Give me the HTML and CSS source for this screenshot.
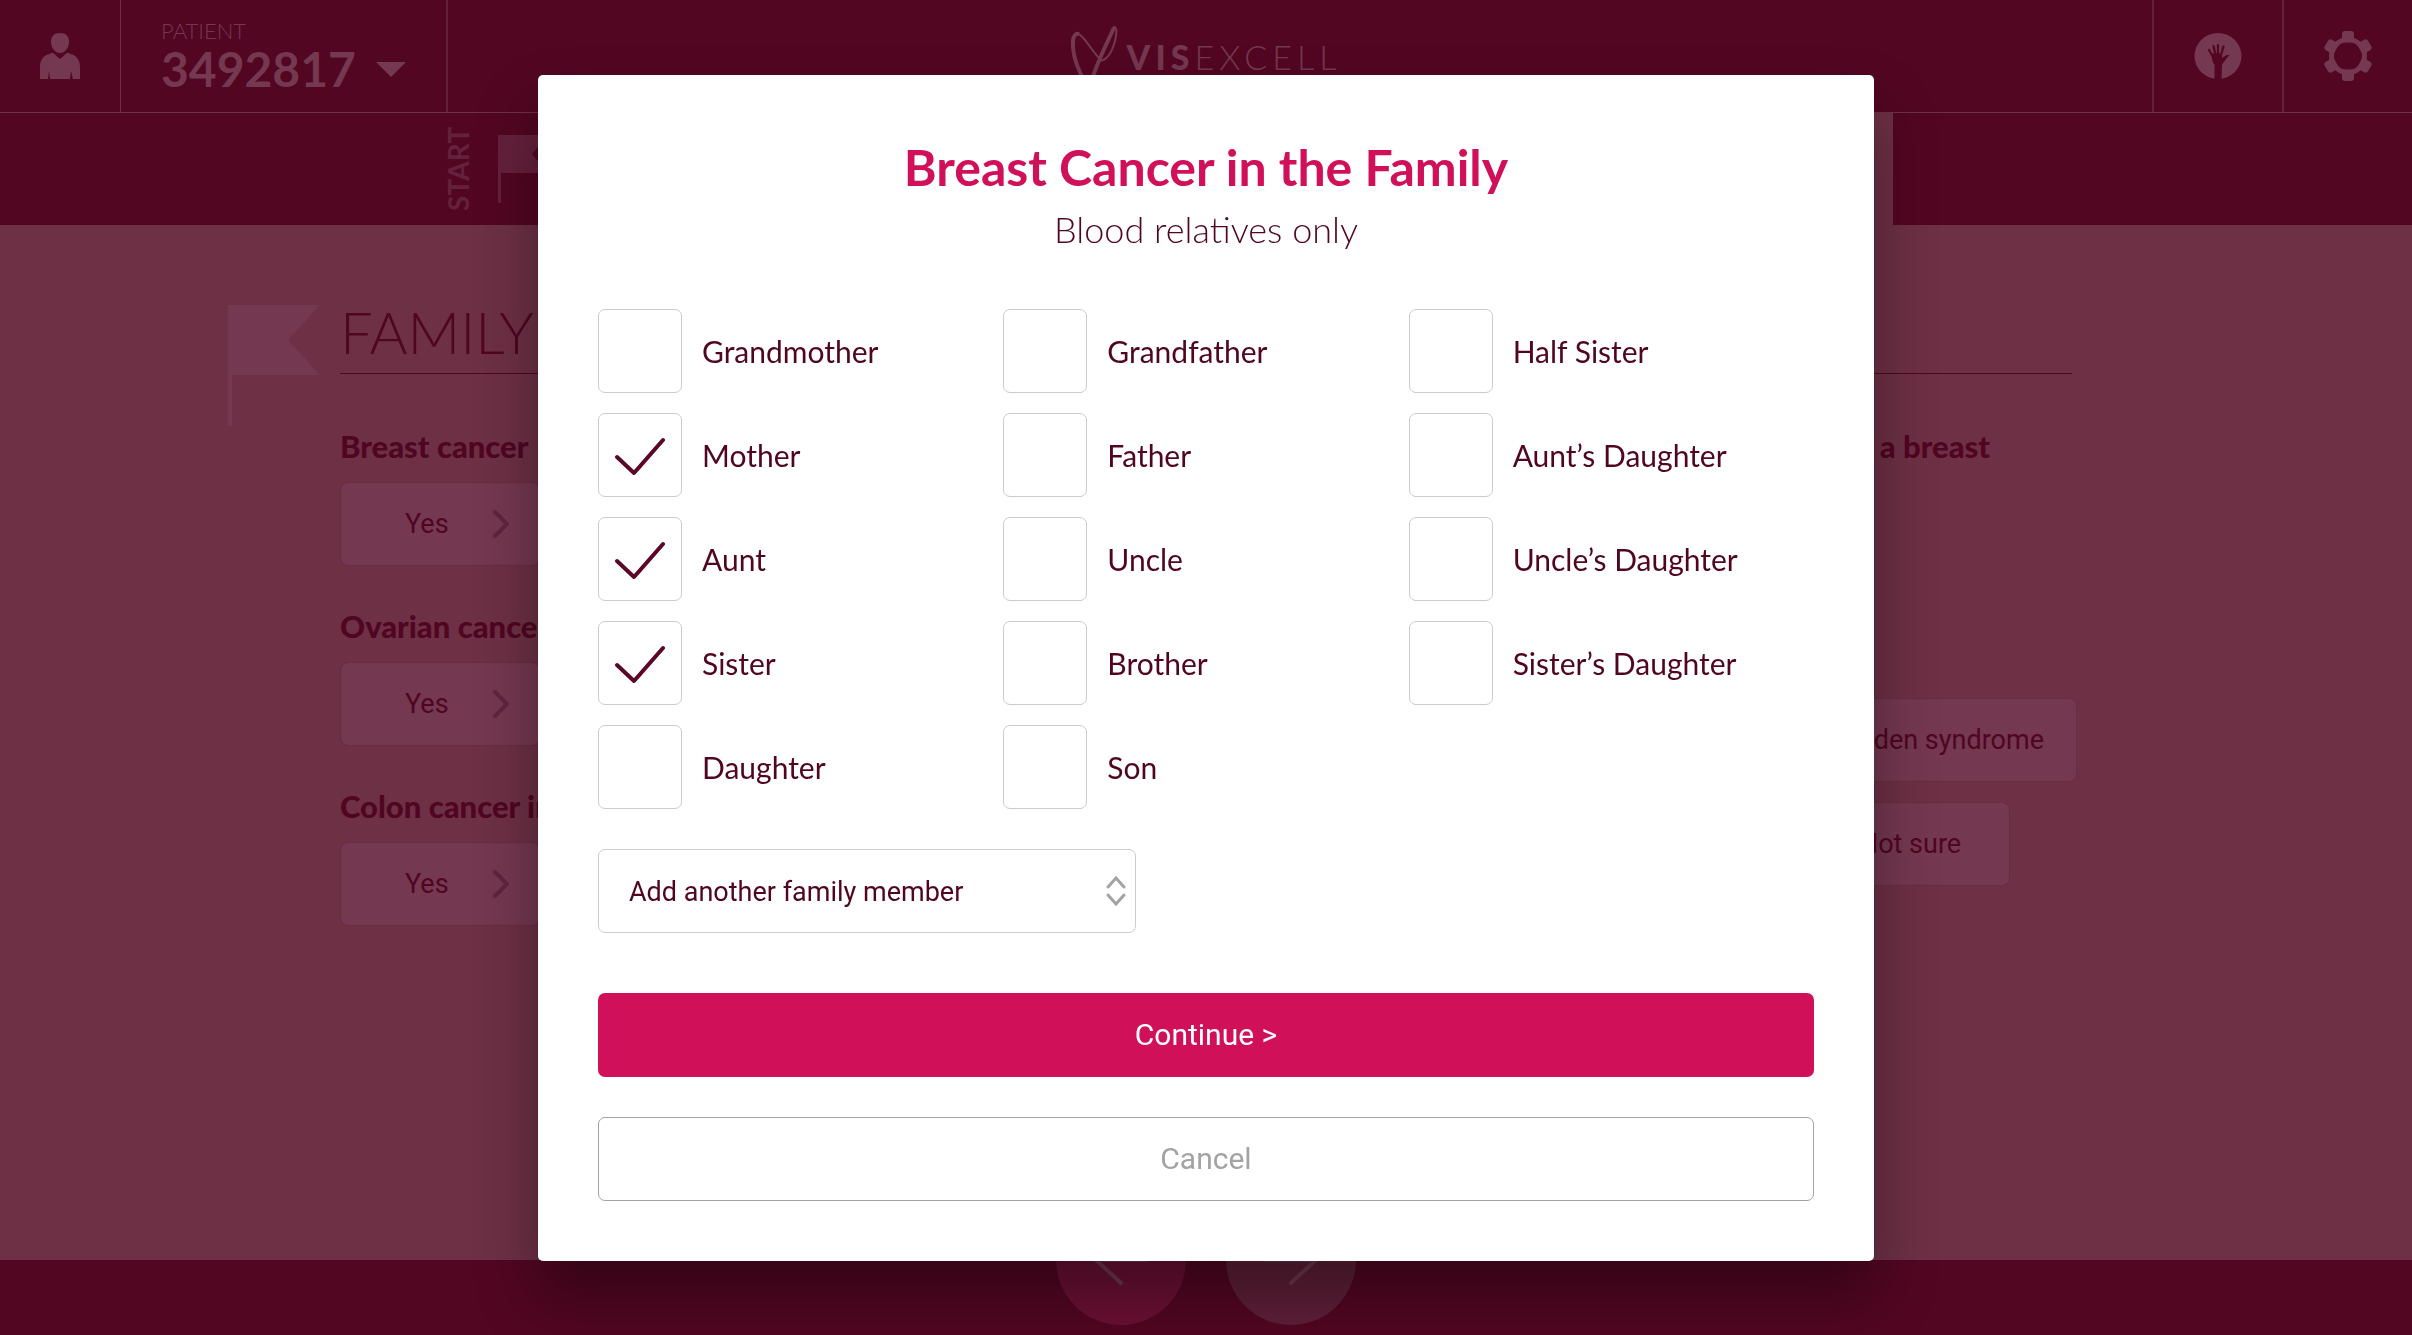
FILE: index.html
```
<!DOCTYPE html>
<html lang="en">
<head>
  <meta charset="UTF-8" />
  <meta name="viewport" content="width=device-width, initial-scale=1.0" />
  <title>Family History - Visexcell</title>
  <link rel="stylesheet" href="styles.css">
</head>
<body>

  <header class="header">
    <div class="header-left">
      <button class="header-icon user" aria-label="Account">
        <svg width="40" height="46" viewBox="0 0 40 46" fill="currentColor">
          <path d="M20 0C26 0 29 3 29 9C29 15 25 20 20 20C15 20 11 15 11 9C11 3 14 0 20 0Z" />
          <path d="M0 46V34C0 26 4 22 10 21L11 20H13C15 21 17 24 20 26C23 24 25 21 27 20H29L30 21C36 22 40 26 40 34V46H33L31 38L30 46H10L9 38L8 46Z" />
        </svg>
      </button>
      <button class="patient">
        <span class="patient-label">PATIENT</span>
        <span class="patient-number">3492817
          <svg width="30" height="15" viewBox="0 0 30 15" fill="currentColor"><path d="M0 0H30L15 15Z" /></svg>
        </span>
      </button>
    </div>
    <div class="logo">
      <svg width="48" height="60" viewBox="0 0 48 60" fill="none" stroke="currentColor">
        <path stroke-width="4" d="M15 58C7 44 1 28 2 15C2 10 5 7 8 8" />
        <path stroke-width="2" d="M7 8C13 9 19 23 29 33" />
        <path stroke-width="4" d="M20 58C22 46 31 27 41 6C42 3 43 2 44 2" />
        <path stroke-width="2" d="M43 1C46 1 46 7 44 15C41 26 36 34 29 35" />
      </svg>
      <span class="logo-text"><b>VIS</b>EXCELL</span>
    </div>
    <div class="header-right">
      <button class="header-icon" aria-label="Help">
        <svg width="48" height="46" viewBox="0 0 48 46">
          <ellipse cx="24" cy="23" rx="23.5" ry="23" fill="currentColor" />
          <g class="hand" stroke-width="2.2" stroke-linecap="round">
            <path d="M15 17L18.500 23M19.500 13L21.500 22M24 12V22M29.500 13.500L27 22" />
            <path d="M17.500 21C19 20 27 20 28 21V25L31 23C33 21.500 35 22 35.500 22.500C33 24 31 28 28 31.500L27.500 48H20.500V32C18 29 18 25 17.500 21Z" stroke="none" />
          </g>
        </svg>
      </button>
      <button class="header-icon" aria-label="Settings">
        <svg width="48" height="50" viewBox="0 0 48 50" fill="currentColor">
          <circle cx="24" cy="25" r="16.500" fill="none" stroke="currentColor" stroke-width="5" />
          <path id="tooth" d="M18 9V3Q18 0 21 0H27Q30 0 30 3V7L34 10L30 11.500H18L14 10Z" />
          <use href="#tooth" transform="rotate(60 24 25)" />
          <use href="#tooth" transform="rotate(120 24 25)" />
          <use href="#tooth" transform="rotate(180 24 25)" />
          <use href="#tooth" transform="rotate(240 24 25)" />
          <use href="#tooth" transform="rotate(300 24 25)" />
        </svg>
      </button>
    </div>
  </header>

  <nav class="steps">
    <div class="steps-inner">
      <span class="steps-start">START</span>
      <svg class="steps-flag" width="50" height="68" viewBox="0 0 50 68" fill="currentColor">
        <path d="M0 0H50L34 19L50 38H3V68H0Z" />
      </svg>
      <div class="step active"></div>
    </div>
  </nav>

  <main class="content">
    <svg class="content-flag" width="92" height="121" viewBox="0 0 92 121" fill="currentColor">
      <path d="M0 0H92L60 35L92 70H4V121H0Z" />
    </svg>
    <div class="content-body">
      <h1>FAMILY</h1>
      <div class="columns">
        <div class="column">
          <section class="question">
            <h2>Breast cancer</h2>
            <button class="answer more">Yes
              <svg width="16" height="28" viewBox="0 0 16 28"><path d="M2 2L14 14L2 26" /></svg>
            </button>
          </section>
          <section class="question">
            <h2>Ovarian cancer</h2>
            <button class="answer more">Yes
              <svg width="16" height="28" viewBox="0 0 16 28"><path d="M2 2L14 14L2 26" /></svg>
            </button>
          </section>
          <section class="question">
            <h2>Colon cancer in</h2>
            <button class="answer more">Yes
              <svg width="16" height="28" viewBox="0 0 16 28"><path d="M2 2L14 14L2 26" /></svg>
            </button>
          </section>
        </div>
        <div class="column right">
          <section class="question">
            <h2>a breast</h2>
          </section>
          <section class="options">
            <button class="answer wide">Cowden syndrome</button>
            <button class="answer last">Not sure</button>
          </section>
        </div>
      </div>
    </div>
  </main>

  <footer class="footer">
    <button class="round back" aria-label="Back">
      <svg width="56" height="50" viewBox="0 0 56 50"><path d="M28 2L3 25L28 48M3 25H54" /></svg>
    </button>
    <button class="round next" aria-label="Next">
      <svg width="56" height="50" viewBox="0 0 56 50"><path d="M28 2L53 25L28 48M53 25H2" /></svg>
    </button>
  </footer>

  <!-- Family member dialog -->
  <div class="overlay">
    <form class="modal" role="dialog" aria-labelledby="modalTitle">
      <h2 class="modal-title" id="modalTitle">Breast Cancer in the Family</h2>
      <p class="modal-subtitle">Blood relatives only</p>

      <div class="relatives">
        <label class="relative"><input type="checkbox" /><span>Grandmother</span></label>
        <label class="relative"><input type="checkbox" checked /><span>Mother</span></label>
        <label class="relative"><input type="checkbox" checked /><span>Aunt</span></label>
        <label class="relative"><input type="checkbox" checked /><span>Sister</span></label>
        <label class="relative"><input type="checkbox" /><span>Daughter</span></label>
        <label class="relative"><input type="checkbox" /><span>Grandfather</span></label>
        <label class="relative"><input type="checkbox" /><span>Father</span></label>
        <label class="relative"><input type="checkbox" /><span>Uncle</span></label>
        <label class="relative"><input type="checkbox" /><span>Brother</span></label>
        <label class="relative"><input type="checkbox" /><span>Son</span></label>
        <label class="relative"><input type="checkbox" /><span>Half Sister</span></label>
        <label class="relative"><input type="checkbox" /><span>Aunt’s Daughter</span></label>
        <label class="relative"><input type="checkbox" /><span>Uncle’s Daughter</span></label>
        <label class="relative"><input type="checkbox" /><span>Sister’s Daughter</span></label>
      </div>

      <div class="select-box">
        <select aria-label="Add another family member">
          <option>Add another family member</option>
        </select>
        <svg width="20" height="30" viewBox="0 0 20 30"><path d="M2 11L10 2L18 11M2 19L10 28L18 19" /></svg>
      </div>

      <button type="button" class="btn btn-primary">Continue &gt;</button>
      <button type="button" class="btn btn-outline">Cancel</button>
    </form>
  </div>

</body>
</html>
```
FILE: styles.css
```
* {
  margin: 0;
  padding: 0;
  box-sizing: border-box;
}

body {
  font-family: Lato, "Open Sans", sans-serif;
  background-color: #6d3045;
  color: #500521;
  display: flex;
  flex-direction: column;
  min-height: 100vh;
}

button {
  font-family: inherit;
  color: inherit;
  background: none;
  border: none;
  cursor: pointer;
}

/* Header */
.header {
  display: grid;
  grid-template-columns: 1fr auto 1fr;
  height: 113px;
  background-color: #520622;
  border-bottom: 1px solid #6d3045;
  color: #743850;
}

.header-left,
.header-right {
  display: flex;
}

.header-right {
  justify-content: flex-end;
}

.header-icon {
  width: 130px;
  border-left: 2px solid #64213b;
  display: flex;
  align-items: center;
  justify-content: center;
}

.header-icon.user {
  width: 121px;
  border-left: none;
  border-right: 1px solid #6d3045;
}

.patient {
  padding: 0 40px;
  border-right: 2px solid #64213b;
  display: flex;
  flex-direction: column;
  justify-content: center;
  text-align: left;
}

.patient-label {
  font-size: 22px;
  font-weight: 300;
  line-height: 26px;
}

.patient-number {
  display: flex;
  align-items: center;
  gap: 20px;
  font-size: 48px;
  font-weight: bold;
  line-height: 50px;
}

.logo {
  display: flex;
  align-items: center;
  gap: 8px;
}

.logo-text {
  font-size: 34px;
  font-weight: 300;
  letter-spacing: 5px;
}

.logo-text b {
  font-weight: 900;
}

.hand {
  stroke: #520622;
  fill: #520622;
}

/* Steps */
.steps {
  height: 112px;
  background-color: #520622;
  color: #64213b;
}

.steps-inner {
  width: 60%;
  height: 100%;
  margin-left: 18.5%;
  display: flex;
  align-items: center;
}

.steps-start {
  writing-mode: vertical-rl;
  transform: rotate(180deg);
  font-size: 28px;
  font-weight: bold;
  line-height: 24px;
}

.steps-flag {
  margin-left: 28px;
}

.step {
  width: 160px;
  height: 100%;
  margin-left: auto;
}

.step.active {
  background-color: #6d3045;
}

/* Content */
.content {
  flex: 1;
  display: flex;
  gap: 20px;
  padding: 80px 340px 0 228px;
}

.content-flag {
  color: #743850;
}

.content-body {
  flex: 1;
}

.content h1 {
  font-size: 58px;
  font-weight: 300;
  line-height: 54px;
  padding-bottom: 14px;
  border-bottom: 1px solid #520622;
}

.columns {
  display: flex;
  justify-content: space-between;
  margin-top: 54px;
  margin-right: -5px;
}

.question {
  margin-bottom: 42px;
}

.question h2 {
  font-size: 31px;
  font-weight: 900;
  line-height: 36px;
  margin-bottom: 18px;
}

.answer {
  min-width: 200px;
  height: 84px;
  border: 1px solid #692c41;
  border-radius: 8px;
  background-color: #743850;
  font-family: Roboto, sans-serif;
  font-size: 27px;
}

.answer.more {
  display: flex;
  align-items: center;
  justify-content: space-between;
  padding: 0 30px 0 64px;
}

.answer svg path {
  fill: none;
  stroke: #602540;
  stroke-width: 4;
  stroke-linecap: round;
}

.answer.wide {
  padding: 0 32px;
}

.answer.last {
  margin-right: 67px;
}

.column.right .question {
  padding-right: 87px;
}

.column.right h2 {
  min-height: 72px;
  text-align: right;
}

.options {
  display: flex;
  flex-direction: column;
  align-items: flex-end;
  gap: 20px;
  margin-top: 198px;
}

/* Footer */
.footer {
  height: 75px;
  background-color: #520622;
  display: flex;
  justify-content: center;
  gap: 40px;
}

.round {
  width: 130px;
  height: 130px;
  margin-top: -65px;
  border-radius: 50%;
  display: flex;
  align-items: center;
  justify-content: center;
}

.round.back {
  background-color: #6b1034;
}

.round.next {
  background-color: #5e1f38;
}

.round svg path {
  fill: none;
  stroke: #703850;
  stroke-width: 4;
  stroke-linecap: round;
}

/* Modal */
.overlay {
  position: fixed;
  inset: 0;
  display: flex;
  align-items: center;
  justify-content: center;
}

.modal {
  width: 1336px;
  max-width: 100%;
  padding: 60px;
  background-color: #fff;
  border-radius: 5px;
  box-shadow: 0 36px 60px rgba(0, 0, 0, 0.36);
  display: flex;
  flex-direction: column;
}

.modal-title {
  font-size: 50px;
  line-height: 64px;
  color: #d1105a;
  text-align: center;
}

.modal-subtitle {
  font-size: 36px;
  font-weight: 300;
  line-height: 60px;
  text-align: center;
  margin-bottom: 50px;
}

.relatives {
  display: grid;
  grid-template-columns: repeat(3, 1fr);
  grid-template-rows: repeat(5, auto);
  grid-auto-flow: column;
  row-gap: 20px;
  margin-bottom: 40px;
}

.relative {
  display: flex;
  align-items: center;
  gap: 20px;
  font-size: 30px;
}

.relative input {
  appearance: none;
  width: 84px;
  height: 84px;
  border: 1px solid #ccc;
  border-radius: 7px;
  background: #fff center no-repeat;
}

.relative input:checked {
  background-image: url("data:image/svg+xml,%3Csvg xmlns='http://www.w3.org/2000/svg' width='84' height='84' fill='none' stroke='%235a0728' stroke-width='4' stroke-linecap='round' stroke-linejoin='round'%3E%3Cpath d='M19 44L36 60L65 27'/%3E%3C/svg%3E");
}

.select-box {
  position: relative;
  width: 538px;
  max-width: 100%;
  margin-bottom: 60px;
}

.select-box select {
  appearance: none;
  width: 100%;
  height: 84px;
  padding: 2px 30px 0;
  border: 1px solid #ccc;
  border-radius: 7px;
  background-color: #fff;
  color: #500521;
  font-family: Roboto, sans-serif;
  font-size: 27px;
}

.select-box svg {
  position: absolute;
  top: 27px;
  right: 10px;
  pointer-events: none;
}

.select-box svg path {
  fill: none;
  stroke: #a3a3a3;
  stroke-width: 3;
  stroke-linecap: round;
}

.btn {
  height: 84px;
  border-radius: 7px;
  font-family: Roboto, sans-serif;
  font-size: 30px;
}

.btn-primary {
  background-color: #d1105a;
  color: #fff;
  margin-bottom: 40px;
}

.btn-outline {
  border: 1px solid #a3a3a3;
  color: #a3a3a3;
}
```
